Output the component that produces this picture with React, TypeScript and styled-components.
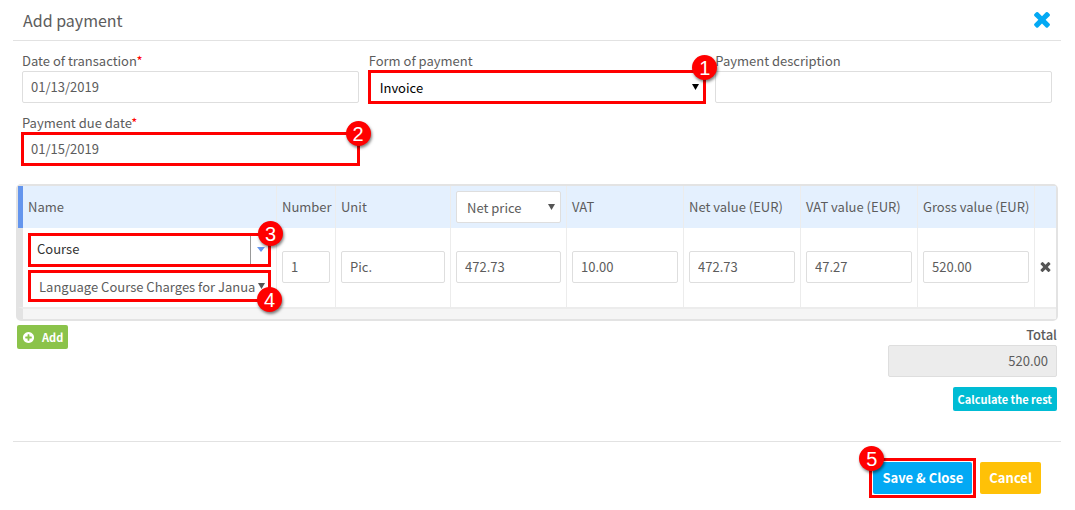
import React from "react";
import styled, { createGlobalStyle, css } from "styled-components";

const GlobalStyle = createGlobalStyle`
  *, *::before, *::after { box-sizing: border-box; }
  body {
    margin: 0;
    background: #fff;
    color: #5c5c5c;
    font-family: "Noto Sans CJK SC", "Noto Sans", sans-serif;
    font-size: 13px;
    line-height: 20px;
  }
  button, input, select { font: inherit; color: inherit; margin: 0; }
`;

const Dialog = styled.main`
  padding: 0 14px 0 13px;
`;

const Header = styled.header`
  display: flex;
  align-items: center;
  justify-content: space-between;
  height: 41px;
  padding: 0 7px 0 10px;
  border-bottom: 1px solid #e2e2e2;
`;

const Title = styled.h1`
  margin: 0;
  font-size: 16px;
  line-height: 24px;
  font-weight: 400;
`;

const IconButton = styled.button<{ $tone: string }>`
  display: flex;
  align-items: center;
  justify-content: center;
  padding: 0 0 2px;
  border: 0;
  background: none;
  color: ${(p) => p.$tone};
  cursor: pointer;
`;

const Fields = styled.section`
  display: grid;
  grid-template-columns: repeat(3, 1fr);
  gap: 10px;
  padding: 10px 9px 19px;
`;

const Field = styled.div`
  display: flex;
  flex-direction: column;
  min-width: 0;
`;

const Label = styled.label`
  height: 20px;
`;

const Required = styled.span`
  color: #f00;
`;

const controlBox = css`
  display: block;
  width: 100%;
  height: 32px;
  border: 1px solid #dedede;
  border-radius: 2px;
  background: #fff;
  outline: none;
`;

const TextInput = styled.input`
  ${controlBox}
  padding: 0 8px 2px;
  &:read-only {
    background: #ececec;
    text-align: right;
  }
`;

const SelectWrap = styled.div`
  display: flex;
  align-items: center;
  position: relative;
`;

const Select = styled.select<{ $dark?: boolean }>`
  ${controlBox}
  appearance: none;
  padding: 2px 15px 0 10px;
  color: ${(p) => (p.$dark ? "#000" : "inherit")};
`;

const Arrow = styled.svg<{ $dark?: boolean }>`
  position: absolute;
  right: 6px;
  width: 7px;
  height: 6px;
  fill: ${(p) => (p.$dark ? "#000" : "#555")};
  pointer-events: none;
`;

const Combo = styled.div`
  display: flex;
  height: 34px;
`;

const ComboInput = styled.input`
  flex: 1;
  min-width: 0;
  padding: 0 9px 2px;
  border: 0;
  color: #333;
  outline: none;
`;

const ComboButton = styled.button`
  display: flex;
  align-items: center;
  justify-content: center;
  width: 21px;
  padding: 0;
  border: 0;
  border-left: 1px solid #999;
  background: #fff;
  color: #6495ed;
`;

const Highlight = styled.div<{ $gap?: number }>`
  position: relative;
  &::after {
    content: "";
    position: absolute;
    inset: ${(p) => -(p.$gap ?? 0)}px;
    border: 3px solid #f00;
    pointer-events: none;
  }
`;

type Corner = "above" | "topRight" | "bottomRight" | "topLeft";

const corners: Record<Corner, string> = {
  above: "top: -16px; right: -12px;",
  topRight: "top: -12px; right: -12px;",
  bottomRight: "bottom: -10px; right: -11px;",
  topLeft: "top: -16px; left: -14px;",
};

const Badge = styled.span<{ $corner: Corner }>`
  position: absolute;
  z-index: 1;
  ${(p) => corners[p.$corner]}
  width: 25px;
  height: 25px;
  border-radius: 50%;
  background: #f00;
  box-shadow: 1px 2px 3px rgba(0, 0, 0, 0.5);
  color: #fff;
  font-family: "Liberation Sans", Arial, sans-serif;
  font-size: 20px;
  line-height: 26px;
  text-align: center;
`;

const Body = styled.div`
  padding: 0 3px;
`;

const TableFrame = styled.div`
  border: 2px solid #e3e3e3;
  border-radius: 5px;
`;

const Table = styled.table`
  width: 100%;
  table-layout: fixed;
  border-collapse: separate;
  border-spacing: 0;
`;

const Column = styled.col<{ $width?: number }>`
  width: ${(p) => (p.$width ? `${p.$width}px` : "auto")};
`;

const cellBox = css`
  padding: 4px 5px 5px;
  border-right: 1px solid #ececec;
  text-align: left;
  white-space: nowrap;
  &:first-child { border-left: 5px solid #e3e3e3; }
  &:last-child { border-right: 0; padding-left: 3px; }
`;

const HeadCell = styled.th`
  ${cellBox}
  height: 42px;
  background: #e4f0fe;
  font-weight: 400;
  &:first-child { border-left-color: #6495ed; }
`;

const Cell = styled.td`
  ${cellBox}
  height: 79px;
`;

const FootCell = styled.td`
  height: 12px;
  padding: 0;
  border-left: 5px solid #e3e3e3;
  border-top: 2px solid #ececec;
  background: #f5f5f5;
`;

const NameStack = styled.div`
  display: flex;
  flex-direction: column;
  gap: 3px;
`;

const Summary = styled.div`
  display: flex;
  justify-content: space-between;
  align-items: flex-start;
  padding: 4px 1px 30px;
`;

const Totals = styled.div`
  display: flex;
  flex-direction: column;
  align-items: flex-end;
  width: 169px;
`;

const TotalLabel = styled(Label)`
  font-weight: 500;
`;

const Button = styled.button<{ $tone: string; $small?: boolean }>`
  display: flex;
  align-items: center;
  gap: 7px;
  height: ${(p) => (p.$small ? 24 : 32)}px;
  padding: 0 ${(p) => (p.$small ? 5 : 9)}px;
  border: 0;
  border-radius: 2px;
  background: ${(p) => p.$tone};
  color: #fff;
  font-size: ${(p) => (p.$small ? 11 : 13)}px;
  font-weight: 700;
  white-space: nowrap;
  cursor: pointer;
`;

const TotalsAction = styled.div`
  padding-top: 10px;
`;

const Footer = styled.footer`
  display: flex;
  justify-content: flex-end;
  gap: 8px;
  padding: 20px 20px 16px;
  border-top: 1px solid #e2e2e2;
`;

const Cross = ({ size }: { size: number }) => (
  <svg width={size} height={size} viewBox="0 0 1792 1792" fill="currentColor" aria-hidden="true">
    <path d="M1490 1322q0 40-28 68l-136 136q-28 28-68 28t-68-28l-294-294-294 294q-28 28-68 28t-68-28l-136-136q-28-28-28-68t28-68l294-294-294-294q-28-28-28-68t28-68l136-136q28-28 68-28t68 28l294 294 294-294q28-28 68-28t68 28l136 136q28 28 28 68t-28 68l-294 294 294 294q28 28 28 68z" />
  </svg>
);

const PlusCircle = () => (
  <svg width="13" height="13" viewBox="0 0 1792 1792" fill="currentColor" aria-hidden="true">
    <path d="M1344 960v-128q0-26-19-45t-45-19h-256v-256q0-26-19-45t-45-19h-128q-26 0-45 19t-19 45v256h-256q-26 0-45 19t-19 45v128q0 26 19 45t45 19h256v256q0 26 19 45t45 19h128q26 0 45-19t19-45v-256h256q26 0 45-19t19-45zm320-64q0 209-103 385.5t-279.5 279.5-385.5 103-385.5-103-279.5-279.5-103-385.5 103-385.5 279.5-279.5 385.5-103 385.5 103 279.5 279.5 103 385.5z" />
  </svg>
);

type DropdownProps = { id?: string; label?: string; options: string[]; dark?: boolean };

const Dropdown = ({ id, label, options, dark }: DropdownProps) => (
  <SelectWrap>
    <Select id={id} aria-label={label} $dark={dark}>
      {options.map((o) => (
        <option key={o}>{o}</option>
      ))}
    </Select>
    <Arrow $dark={dark} viewBox="0 0 7 6" aria-hidden="true">
      <path d="M0 0H7L3.5 6Z" />
    </Arrow>
  </SelectWrap>
);

const columns = [undefined, 59, 115, 116, 117, 117, 117, 117, 21];

const rowValues = [
  ["Number", "1"],
  ["Unit", "Pic."],
  ["Net price", "472.73"],
  ["VAT", "10.00"],
  ["Net value (EUR)", "472.73"],
  ["VAT value (EUR)", "47.27"],
  ["Gross value (EUR)", "520.00"],
];

export default function App() {
  return (
    <>
      <GlobalStyle />
      <Dialog>
        <Header>
          <Title>Add payment</Title>
          <IconButton $tone="#03a9f4" aria-label="Close">
            <Cross size={24} />
          </IconButton>
        </Header>

        <Fields>
          <Field>
            <Label htmlFor="date">Date of transaction<Required>*</Required></Label>
            <TextInput id="date" defaultValue="01/13/2019" />
          </Field>
          <Field>
            <Label htmlFor="form">Form of payment</Label>
            <Highlight $gap={1}>
              <Dropdown id="form" options={["Invoice", "Cash"]} dark />
              <Badge $corner="above">1</Badge>
            </Highlight>
          </Field>
          <Field>
            <Label htmlFor="description">Payment description</Label>
            <TextInput id="description" />
          </Field>
          <Field>
            <Label htmlFor="due">Payment due date<Required>*</Required></Label>
            <Highlight $gap={1}>
              <TextInput id="due" defaultValue="01/15/2019" />
              <Badge $corner="topRight">2</Badge>
            </Highlight>
          </Field>
        </Fields>

        <Body>
          <TableFrame>
            <Table>
              <colgroup>
                {columns.map((w, i) => (
                  <Column key={i} $width={w} />
                ))}
              </colgroup>
              <thead>
                <tr>
                  <HeadCell>Name</HeadCell>
                  <HeadCell>Number</HeadCell>
                  <HeadCell>Unit</HeadCell>
                  <HeadCell>
                    <Dropdown label="Price type" options={["Net price", "Gross price"]} />
                  </HeadCell>
                  <HeadCell>VAT</HeadCell>
                  <HeadCell>Net value (EUR)</HeadCell>
                  <HeadCell>VAT value (EUR)</HeadCell>
                  <HeadCell>Gross value (EUR)</HeadCell>
                  <HeadCell />
                </tr>
              </thead>
              <tbody>
                <tr>
                  <Cell>
                    <NameStack>
                      <Highlight>
                        <Combo>
                          <ComboInput aria-label="Name" defaultValue="Course" />
                          <ComboButton aria-label="Show names">
                            <svg width="8" height="5" viewBox="0 0 8 5" fill="currentColor" aria-hidden="true">
                              <path d="M0 0H8L4 5Z" />
                            </svg>
                          </ComboButton>
                        </Combo>
                        <Badge $corner="topRight">3</Badge>
                      </Highlight>
                      <Highlight>
                        <Dropdown label="Charge" options={["Language Course Charges for January"]} />
                        <Badge $corner="bottomRight">4</Badge>
                      </Highlight>
                    </NameStack>
                  </Cell>
                  {rowValues.map(([label, value]) => (
                    <Cell key={label}>
                      <TextInput aria-label={label} defaultValue={value} />
                    </Cell>
                  ))}
                  <Cell>
                    <IconButton $tone="#555" aria-label="Remove row">
                      <Cross size={15} />
                    </IconButton>
                  </Cell>
                </tr>
              </tbody>
              <tfoot>
                <tr>
                  <FootCell colSpan={9} />
                </tr>
              </tfoot>
            </Table>
          </TableFrame>

          <Summary>
            <Button $tone="#8bc34a" $small>
              <PlusCircle />
              Add
            </Button>
            <Totals>
              <TotalLabel htmlFor="total">Total</TotalLabel>
              <TextInput id="total" value="520.00" readOnly />
              <TotalsAction>
                <Button $tone="#00bcd4" $small>Calculate the rest</Button>
              </TotalsAction>
            </Totals>
          </Summary>
        </Body>

        <Footer>
          <Highlight $gap={4}>
            <Button $tone="#03a9f4">Save &amp; Close</Button>
            <Badge $corner="topLeft">5</Badge>
          </Highlight>
          <Button $tone="#ffc107">Cancel</Button>
        </Footer>
      </Dialog>
    </>
  );
}
